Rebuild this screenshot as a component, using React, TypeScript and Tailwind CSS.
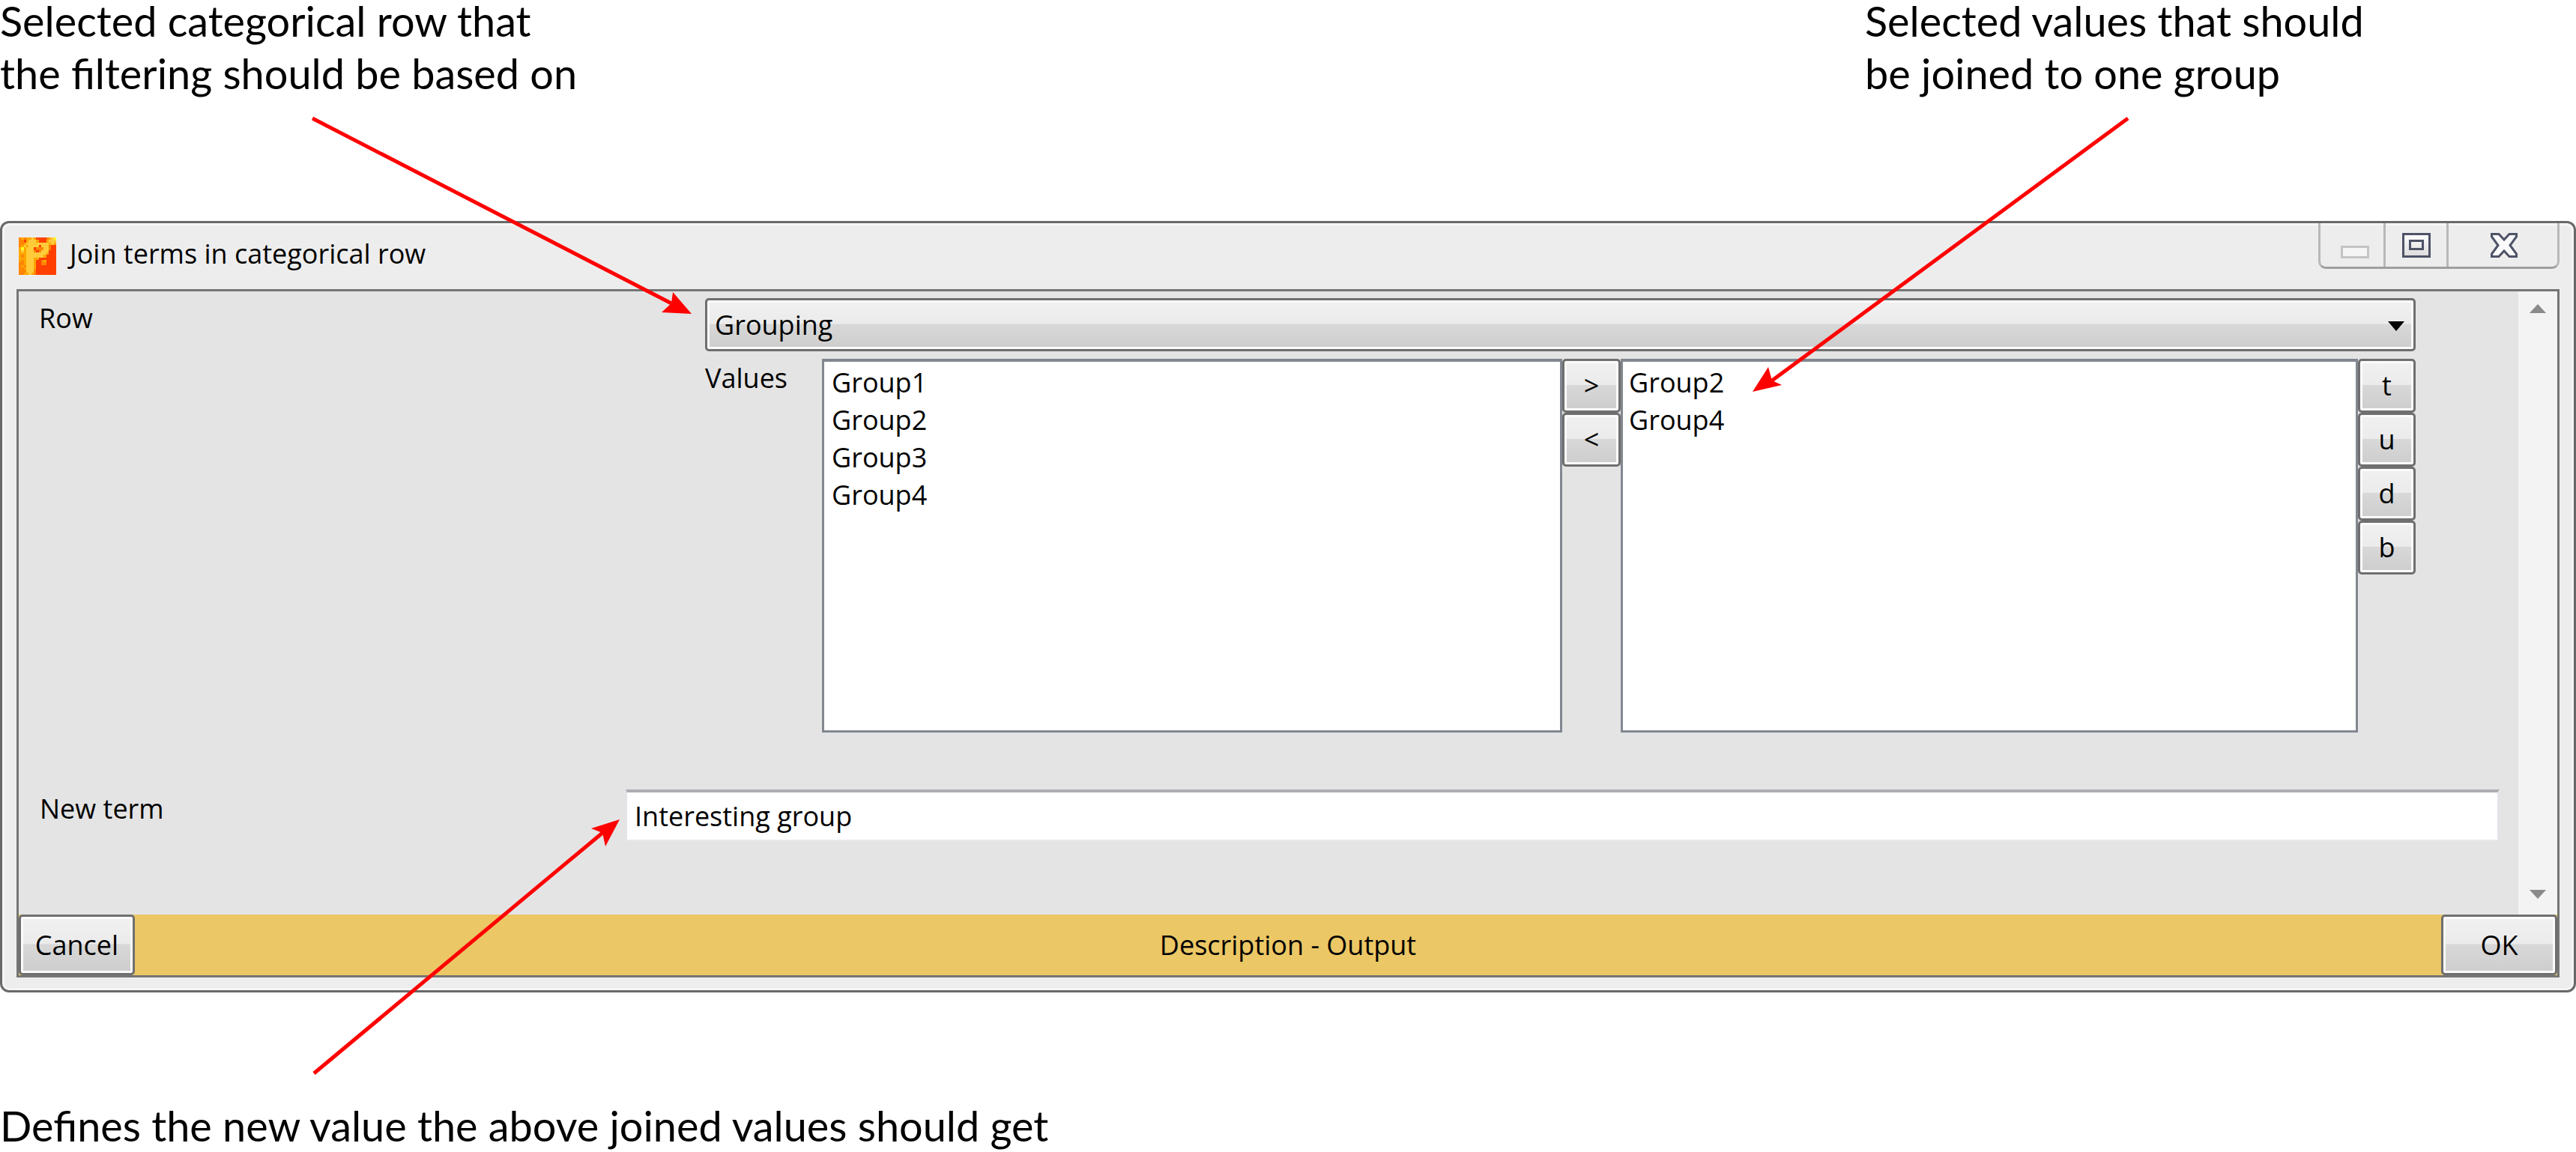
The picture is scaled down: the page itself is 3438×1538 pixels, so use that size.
const UI = "font-['Open_Sans',sans-serif] text-[36px] leading-none text-black";
const NOTE = "font-['Lato',sans-serif] text-[55.8px] leading-[56px] text-black whitespace-nowrap";
const BTN = "flex items-center rounded-[5px] border-[3px] border-[#6f6f6f] shadow-[inset_0_0_0_3px_#fbfbfb] bg-[linear-gradient(#f1f1f1_0%,#ebebeb_48%,#d8d8d8_49%,#cdcdcd_100%)]";

const PIX = [
  "oaoaayarrrroayY",
  "oorayyyarrrayyy",
  "ooayyyyyyyyyaya",
  "oayayyyyryyyorr",
  "aYayyyroooyyorr",
  "ayayyyoroyyyrrr",
  "aaayyyyyyyyarrr",
  "aoayyyyyyyarrrr",
  "aaayyyaarrrrrrr",
  "aoayyyarroarrrr",
  "ooayyyarroorrrr",
  "oaoyyyarrrrrrrr",
  "ooayyyarrrrrrrr",
  "oooyyyorrrrrrrr",
  "ooaayaorrrrrrrr",
];
const PC: Record<string, string> = { r: "#ff4000", o: "#ff8500", a: "#ffa500", y: "#ffcb3a", Y: "#ffff20" };

function AppIcon() {
  return (
    <svg width="50" height="50" viewBox="0 0 15 15" shapeRendering="crispEdges" className="shrink-0">
      {PIX.map((row, y) =>
        row.split("").map((c, x) => <rect key={`${x}-${y}`} x={x} y={y} width="1.02" height="1.02" fill={PC[c]} />)
      )}
    </svg>
  );
}

function WindowButtons() {
  return (
    <div className="flex h-[61px] w-[322px] rounded-b-[10px] border-x-[3px] border-b-[3px] border-x-[#b8b8b8] border-b-[#9f9f9f]">
      <div className="flex w-[87px] items-start justify-center border-r-[3px] border-[#b8b8b8] pt-[30px] pl-[8px]">
        <div className="h-[17px] w-[38px] border-[3px] border-[#c4c4c4] bg-[#f5f5f5]" />
      </div>
      <div className="flex w-[84px] items-start justify-center border-r-[3px] border-[#b8b8b8] pt-[13px]">
        <svg width="38" height="33" viewBox="0 0 38 33">
          <defs>
            <linearGradient id="mx" x1="0" y1="0" x2="0" y2="1">
              <stop offset="0" stopColor="#ffffff" />
              <stop offset="1" stopColor="#dcdcdc" />
            </linearGradient>
          </defs>
          <rect x="1.5" y="1.5" width="35" height="30" fill="url(#mx)" stroke="#4f5368" strokeWidth="3" />
          <rect x="10.5" y="10.5" width="17" height="11" fill="none" stroke="#4f5368" strokeWidth="3" />
        </svg>
      </div>
      <div className="flex flex-1 items-start justify-center pt-[13px] pl-[2px]">
        <svg width="36" height="33" viewBox="0 0 36 33">
          <path d="M1.5 1.5H11L18 9L25 1.5H34.5V5L26 16.5L34.5 28V31.5H25L18 24L11 31.5H1.5V28L10 16.5L1.5 5Z" fill="#fbfbfb" stroke="#4f5368" strokeWidth="3" />
        </svg>
      </div>
    </div>
  );
}

function Small({ c, className }: { c: string; className: string }) {
  return <div className={`${BTN} ${UI} justify-center ${className}`}>{c}</div>;
}

function ListBox({ items, className }: { items: string[]; className: string }) {
  return (
    <div className={`${UI} flex h-[499px] flex-col border-x-[3px] border-t-[4px] border-b-[3px] border-[#828790] bg-white pt-[3px] ${className}`}>
      {items.map((t) => (
        <div key={t} className="h-[50px] leading-[50px]">{t}</div>
      ))}
    </div>
  );
}

function Arrows() {
  return (
    <svg className="pointer-events-none absolute left-0 top-0" width="3438" height="1538" viewBox="0 0 3438 1538">
      <g fill="#ff0000" stroke="#ff0000" strokeWidth="5">
        <line x1="417" y1="158" x2="896" y2="405" />
        <line x1="2840" y1="158" x2="2365" y2="508" />
        <line x1="419" y1="1433" x2="804" y2="1112" />
      </g>
      <g fill="#ff0000">
        <polygon points="923,419 898,390 896,405 883,417" />
        <polygon points="2339,523 2360,490 2365,508 2378,514" />
        <polygon points="827,1094 789,1106 804,1112 808,1130" />
      </g>
    </svg>
  );
}

export default function App() {
  return (
    <div className="relative flex h-[1538px] w-[3438px] flex-col overflow-hidden bg-white">
      <div className="flex h-[295px] shrink-0 justify-between pr-[299px]">
        <div className={`${NOTE} flex flex-col gap-[14px]`}>
          <div>Selected categorical row that</div>
          <div>the filtering should be based on</div>
        </div>
        <div className={`${NOTE} flex w-[650px] flex-col gap-[14px]`}>
          <div>Selected values that should</div>
          <div>be joined to one group</div>
        </div>
      </div>

      <div className="flex h-[1030px] shrink-0 flex-col rounded-[12px] border-[3px] border-[#696969] bg-[#ededed] shadow-[inset_0_0_0_3px_#f5f5f5]">
        <div className="flex h-[88px] items-start justify-between pr-[19px]">
          <div className="flex items-center gap-[18px] pl-[22px] pt-[19px]">
            <AppIcon />
            <span className={`${UI} pb-[6px]`}>Join terms in categorical row</span>
          </div>
          <WindowButtons />
        </div>

        <div className="mx-[19px] mb-[17px] flex flex-1 flex-col border-[3px] border-[#757575] bg-[#e4e4e4]">
          <div className="flex flex-1">
            <div className="flex flex-1 flex-col">
              <div className="flex pt-[9px]">
                <div className={`${UI} w-[916px] pl-[27px] pt-[9px]`}>Row</div>
                <div className={`${BTN} ${UI} h-[71px] w-[2283px] justify-between pl-[10px] pr-[12px]`}>
                  <span>Grouping</span>
                  <svg className="mt-[4px]" width="22" height="13" viewBox="0 0 22 13"><path d="M0 0H22L11 13Z" fill="#000" /></svg>
                </div>
              </div>
              <div className="flex pt-[10px]">
                <div className={`${UI} w-[1072px] pl-[916px] pt-[8px]`}>Values</div>
                <ListBox items={["Group1", "Group2", "Group3", "Group4"]} className="w-[988px] pl-[10px]" />
                <div className="flex w-[78px] flex-col">
                  <Small c=">" className="h-[72px]" />
                  <Small c="<" className="h-[72px]" />
                </div>
                <ListBox items={["Group2", "Group4"]} className="w-[984px] pl-[8px]" />
                <div className="flex w-[77px] flex-col">
                  <Small c="t" className="h-[72px]" />
                  <Small c="u" className="h-[72px]" />
                  <Small c="d" className="h-[72px]" />
                  <Small c="b" className="h-[72px]" />
                </div>
              </div>
              <div className="flex pt-[76px]">
                <div className={`${UI} w-[810px] pl-[28px] pt-[8px]`}>New term</div>
                <div className={`${UI} flex h-[69px] w-[2501px] items-center border-t-[4px] border-r-[3px] border-t-[#adadb3] border-r-[#e3e3ea] border-b-[2px] border-b-[#e8e8ee] border-l-[2px] border-l-[#e3e3ea] bg-white pl-[10px]`}>
                  Interesting group
                </div>
              </div>
            </div>
            <div className="relative w-[52px] bg-[#f3f3f3]">
              <svg className="absolute left-[15px] top-[17px]" width="22" height="12" viewBox="0 0 22 12"><path d="M0 12H22L11 0Z" fill="#8a8a8a" /></svg>
              <svg className="absolute bottom-[21px] left-[15px]" width="22" height="12" viewBox="0 0 22 12"><path d="M0 0H22L11 12Z" fill="#8a8a8a" /></svg>
            </div>
          </div>
          <div className="flex h-[81px] items-stretch bg-[#ecc765]">
            <div className={`${BTN} ${UI} w-[155px] justify-center`}>Cancel</div>
            <div className={`${UI} flex flex-1 items-center justify-center`}>Description - Output</div>
            <div className={`${BTN} ${UI} w-[155px] justify-center`}>OK</div>
          </div>
        </div>
      </div>

      <div className={`${NOTE} pt-[150px]`}>Defines the new value the above joined values should get</div>
      <Arrows />
    </div>
  );
}
